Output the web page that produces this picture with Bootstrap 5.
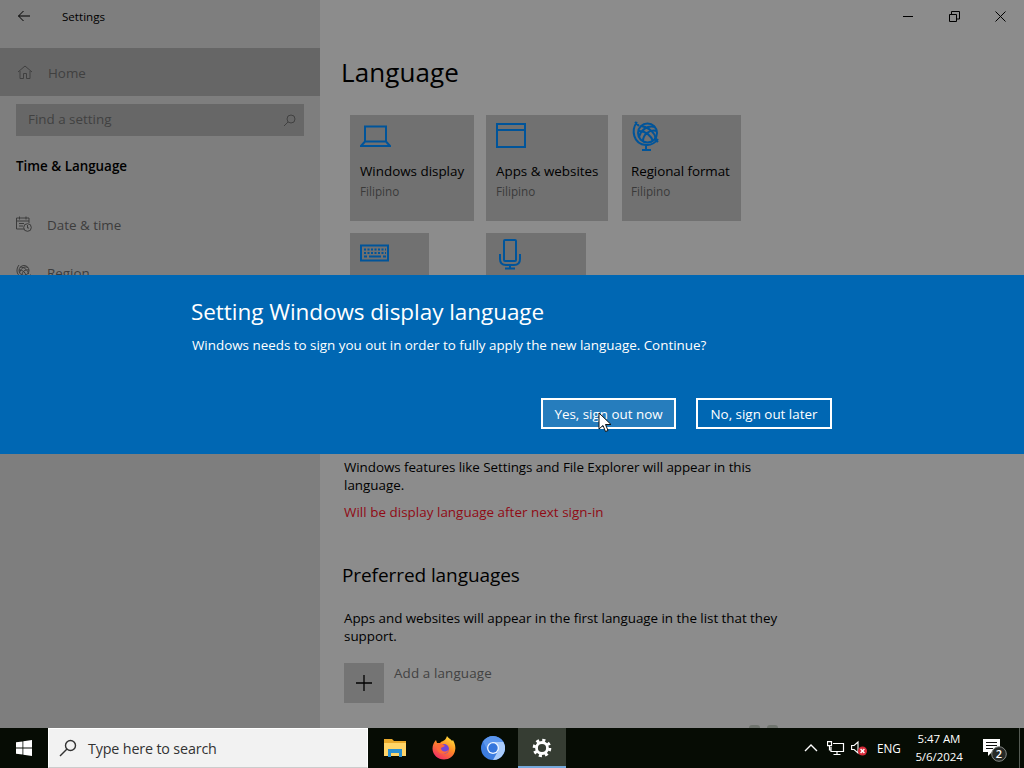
<!DOCTYPE html>
<html lang="en">
<head>
<meta charset="utf-8">
<title>Settings</title>
<link href="https://cdn.jsdelivr.net/npm/bootstrap@5.3.0/dist/css/bootstrap.min.css" rel="stylesheet">
<script src="https://cdn.jsdelivr.net/npm/bootstrap@5.3.0/dist/js/bootstrap.bundle.min.js" defer></script>
<style>
body{width:1024px;height:768px;overflow:hidden;font-family:"Open Sans","Noto Sans",sans-serif;font-size:13.4px;line-height:18px;color:#000;background:#8c8c8c}
svg{display:block;flex:none;fill:none;stroke:currentColor}
.t{white-space:nowrap;display:block}
.window{height:728px}
.side{width:320px;background:#7e7e7e;color:#3c3c3c}
.titlebar{height:33px;color:#000}
.home{height:48px;margin-top:15px;background:#666;padding-left:17px;color:#404040}
.find{height:32px;width:288px;margin:8px 0 0 16px;background:#676767;color:#414141}
.navrow{height:48px;padding-left:16px}
.main{width:704px;background:#8c8c8c}
.caption-btn{width:46px;height:33px}
.tile{background:#717171;padding-left:10px;height:106px}
.tile .art{height:47px;padding-top:5px;color:#00549a}
.sub{color:#3a3a3a;font-size:11.7px;margin-top:2px}
.dialog{top:275px;left:0;width:1024px;height:179px;background:#0067b3;color:#fff;padding:0 192px}
.dbtn{height:31px;border:2px solid #fff;border-radius:0;color:#fff;padding:0;font-size:13.4px;line-height:26px}
.dbtn.hot{background:#267dbd}
.taskbar{height:40px;background:#060c04;color:#fff}
.searchbox{width:320px;height:40px;background:#f2f2f2;color:#333;border:1px solid #fff;border-bottom-color:#ccc}
.app{width:49px;height:40px}
.app.on{width:48px;background:#363d33;border-bottom:2px solid #76a9dc}
.smudge{left:749px;bottom:0;gap:7px}
.smudge i{width:11px;height:3px;border-radius:6px 6px 0 0;background:#6f746e}
</style>
</head>
<body>
<div class="window position-relative d-flex overflow-hidden">
  <aside class="side flex-shrink-0">
    <div class="titlebar d-flex align-items-center">
      <svg width="14" height="12" viewBox="0 0 14 12" style="margin-left:17px;margin-top:-2px"><path d="M13 6H1.5M6.5 1l-5 5 5 5"/></svg>
      <span class="t" style="margin-left:31px;font-size:11.6px">Settings</span>
    </div>
    <div class="home d-flex align-items-center">
      <svg width="16" height="16" viewBox="0 0 16 16"><path d="M1 8l7-6 7 6M3 7v7.500h3.500V9.500h3v5H13V7"/></svg>
      <span class="t" style="margin:2px 0 0 15px">Home</span>
    </div>
    <div class="find d-flex align-items-center justify-content-between">
      <span class="t" style="margin-left:12px;margin-top:-2px">Find a setting</span>
      <svg class="me-2" width="13" height="13" viewBox="0 0 13 13"><circle cx="8" cy="5" r="4"/><path d="M5 8l-4 4"/></svg>
    </div>
    <div class="t fw-semibold text-black" style="margin:21px 0 0 16px;">Time &amp; Language</div>
    <div class="navrow d-flex align-items-center" style="margin-top:26px">
      <svg width="16" height="16" viewBox="0 0 16 16" style="margin-top:-2px"><path d="M8 13H.5V2H13v5M.5 5H13M3.500 .5v3M10 .5v3M3 7.500h5M3 10h4"/><circle cx="11.500" cy="11.500" r="3.800"/><path d="M11.500 9v3H13"/></svg>
      <span class="t" style="margin-left:15px">Date &amp; time</span>
    </div>
    <div class="navrow d-flex align-items-center">
      <svg width="16" height="16" viewBox="0 0 16 16" style="margin-top:-2px"><circle cx="8" cy="6.500" r="5"/><path d="M3 1C-1 6 1 13 8 13.500c3 0 5-1 6.500-3M4 3c5 0 8 4 8.500 7M3.500 9C5 4 8 2 12 3.500M3 6c4 0 6 2 7 5.500M6 11C6 8 9 5 13 6M8 13v2.500M5 15.500h6"/></svg>
      <span class="t" style="margin-left:15px">Region</span>
    </div>
  </aside>
  <main class="main">
    <div class="titlebar d-flex justify-content-end">
      <div class="caption-btn d-flex align-items-center justify-content-center"><svg width="12" height="11"><path d="M0 5.500h10"/></svg></div>
      <div class="caption-btn d-flex align-items-center justify-content-center"><svg width="12" height="11"><path d="M.5 3.500h7v7h-7zM2.500 3V.5h8v7.500H8"/></svg></div>
      <div class="caption-btn d-flex align-items-center justify-content-center"><svg width="12" height="11"><path d="M.5.5l10 10M10.500.5l-10 10"/></svg></div>
    </div>
    <h1 class="t fw-normal mb-0" style="margin:19px 0 0 21px;font-size:26px;line-height:40px;letter-spacing:.1px">Language</h1>
    <div class="d-flex" style="margin:23px 0 0 30px">
      <div class="tile" style="width:124px">
        <div class="art"><svg width="31" height="32" viewBox="0 0 31 32" stroke-width="2"><path d="M5 6.500h21v15H5zM5 21.500l-4 4.500h29l-4-4.500"/></svg></div>
        <span class="t">Windows display</span><span class="t sub">Filipino</span>
      </div>
      <div class="tile" style="width:122px;margin-left:12px">
        <div class="art"><svg width="31" height="32" viewBox="0 0 31 32" stroke-width="2"><path d="M1 4h28v23H1zM1 10h28"/></svg></div>
        <span class="t">Apps &amp; websites</span><span class="t sub">Filipino</span>
      </div>
      <div class="tile" style="width:119px;margin-left:14px;padding-left:9px">
        <div class="art"><svg width="31" height="32" viewBox="0 0 31 32" stroke-width="2"><circle cx="16.500" cy="13" r="9.500"/><path d="M6 2C0 10 2 24 15 25c5 .5 9-2 12-6M4 2l4 4M24 19l3 3M15 25v5M11 30h9M10 6c8 1 14 7 15 13M8 17C10 10 16 5 24 7M8 11c7 0 12 5 14 10M12 21C12 15 18 9 26 11"/></svg></div>
        <span class="t" style="letter-spacing:-.06px">Regional format</span><span class="t sub">Filipino</span>
      </div>
    </div>
    <div class="d-flex" style="margin:12px 0 0 30px">
      <div class="tile" style="width:79px"><div class="art"><svg width="31" height="32" viewBox="0 0 31 32" stroke-width="2"><path d="M1 7.500h27v15H1z"/><path d="M4 11.500h22M4 15h22" stroke-dasharray="2 1.500"/><path d="M4 18.500h3M9 18.500h12M23 18.500h3"/></svg></div></div>
      <div class="tile" style="width:100px;margin-left:57px"><div class="art"><svg width="31" height="32" viewBox="0 0 31 32" stroke-width="2"><rect x="8" y="2" width="12" height="21" rx="1"/><path d="M4 16v5q0 6 6 6h8q6 0 6-6v-5M14 27v3.500M9 30.500h10"/></svg></div></div>
    </div>
    <div style="margin:119px 0 0 24px;width:450px">
      <span class="t" style="letter-spacing:-.06px">Windows features like Settings and File Explorer will appear in this</span>
      <span class="t">language.</span>
      <span class="t" style="margin-top:9px;color:#900a14;letter-spacing:.04px">Will be display language after next sign-in</span>
    </div>
    <h2 class="t fw-normal mb-0" style="margin:42px 0 0 22px;font-size:19px;line-height:24px;letter-spacing:-.08px">Preferred languages</h2>
    <div style="margin:22px 0 0 24px">
      <span class="t" style="letter-spacing:-.03px">Apps and websites will appear in the first language in the list that they</span>
      <span class="t">support.</span>
    </div>
    <div class="d-flex" style="margin:18px 0 0 24px">
      <div class="d-flex align-items-center justify-content-center" style="width:40px;height:40px;background:#747474"><svg width="16" height="16"><path d="M8 0v16M0 8h16" stroke-width="1.300"/></svg></div>
      <span class="t" style="margin:1px 0 0 10px;color:#424242;letter-spacing:.13px">Add a language</span>
    </div>
  </main>
  <div class="smudge position-absolute d-flex"><i></i><i></i></div>
  <section class="dialog position-absolute">
    <h3 class="t fw-normal mb-0" style="margin:21px 0 0 -1px;font-size:22.500px;line-height:32px;letter-spacing:-.05px">Setting Windows display language</h3>
    <p class="t mb-0" style="margin-top:8px">Windows needs to sign you out in order to fully apply the new language. Continue?</p>
    <div class="d-flex justify-content-end" style="margin-top:44px;gap:20px">
      <button class="btn dbtn hot" style="width:135px">Yes, sign out now</button>
      <button class="btn dbtn" style="width:136px">No, sign out later</button>
    </div>
    <svg class="position-absolute" style="left:598px;top:137px" width="14" height="21" viewBox="0 0 14 21"><path d="M1 1v16l4-3.500 2.500 6 2.500-1-2.500-6H13z" fill="#fff" stroke="#111"/></svg>
  </section>
</div>
<footer class="taskbar d-flex">
  <div class="d-flex align-items-center justify-content-center" style="width:48px"><svg width="16" height="16" viewBox="0 0 16 16" style="fill:#fff;stroke:none"><path d="M0 2.300l6.500-.9v6.100H0zM7.300 1.300L16 0v7.500H7.300zM0 8.400h6.500v6.200L0 13.700zM7.300 8.400H16V16l-8.700-1.300z"/></svg></div>
  <div class="searchbox d-flex align-items-center"><svg width="18" height="18" viewBox="0 0 18 18" style="margin-left:10px" stroke-width="1.400"><circle cx="11.500" cy="6.500" r="5"/><path d="M8 10l-7 7"/></svg><span class="t" style="margin-left:11px;margin-top:1px;font-size:14.300px;letter-spacing:-.15px">Type here to search</span></div>
  <div class="app d-flex align-items-center justify-content-center" style="margin-left:2px"><svg width="22" height="20" viewBox="0 0 22 20" style="stroke:none"><path d="M0 1h8l2 2h12v15H0z" fill="#e8a92c"/><path d="M0 5h22v13H0z" fill="#ffd568"/><path d="M4 11h14v8h-3v-4H7v4H4z" fill="#2a8fd0"/></svg></div>
  <div class="app d-flex align-items-center justify-content-center"><svg width="24" height="24" viewBox="0 0 24 24" style="stroke:none"><defs><linearGradient id="f" x1=".8" y1="0" x2=".2" y2="1"><stop offset="0" stop-color="#ffe43c"/><stop offset=".45" stop-color="#ff8a25"/><stop offset="1" stop-color="#f0256b"/></linearGradient></defs><path d="M15 0c2 3 4 3 5 5l1-1c2 4 3 7 2 11-1 5-6 8.500-11 8.500C6 23.500.5 19 .5 12.500.500 9 2 6 4 4l1 3 3 0 1-1C11 5 14 4 15 0z" fill="url(#f)"/><circle cx="12" cy="13" r="5" fill="#7546d8"/><path d="M5 8c4-1 6 0 8 2l-4 2c0 4 5 5 8 1-1 6-10 7-12 0z" fill="#ff6a3a"/></svg></div>
  <div class="app d-flex align-items-center justify-content-center"><svg width="24" height="24" viewBox="0 0 24 24" style="stroke:none"><circle cx="12" cy="12" r="12" fill="#3d7de0"/><path d="M12 6h10.400A12 12 0 0 1 12 24l5-9z" fill="#a9cbfb"/><path d="M2 5.500A12 12 0 0 1 22.400 6H12a6 6 0 0 0-5 9z" fill="#5b96ee"/><circle cx="12" cy="12" r="6" fill="#eef5ff"/><circle cx="12" cy="12" r="4.700" fill="#3475dc"/></svg></div>
  <div class="app on d-flex align-items-center justify-content-center" style="margin-left:1px"><svg width="20" height="20" viewBox="0 0 20 20" style="margin-top:2px"><circle cx="10" cy="10" r="5.500" stroke="#fff" stroke-width="2.800"/><circle cx="10" cy="10" r="7.800" stroke="#fff" stroke-width="3" stroke-dasharray="3.060 3.066"/></svg></div>
  <div class="d-flex ms-auto align-items-center">
    <svg width="14" height="8" viewBox="0 0 14 8" stroke-width="1.400"><path d="M1 7l6-6 6 6"/></svg>
    <svg width="18" height="15" viewBox="0 0 18 15" stroke-width="1.200" style="margin-left:9px"><path d="M6 2.500h10.500v8H4V6M10 10.500v3M6.500 13.500h7M.5.600h4v4h-4zM2.500 4.500V9H4"/></svg>
    <svg width="18" height="16" viewBox="0 0 18 16" style="margin-left:6px" stroke-width="1.100"><path d="M.6 5.500h2.500L7 2v11L3.100 9.500H.6z"/><circle cx="11.500" cy="11" r="4.500" fill="#d92b3a" stroke="none"/><path d="M9.600 9.100l3.800 3.800M13.400 9.100l-3.800 3.800" stroke-width="1.400"/></svg>
    <span class="t" style="margin-left:8px;font-size:11.700px;width:24px">ENG</span>
    <div class="text-center" style="margin-left:14px;width:48px;font-size:11.500px;line-height:18px;letter-spacing:-.08px"><span class="t">5:47 AM</span><span class="t">5/6/2024</span></div>
    <svg width="26" height="26" viewBox="0 0 26 26" style="margin-left:20px;margin-top:2px;margin-right:10px"><path d="M0 3h17v13h-8l-4 4v-4H0z" fill="#fff" stroke="none"/><path d="M3 6.500h11M3 9.500h11M3 12.500h7" stroke="#111"/><circle cx="16" cy="18" r="7.300" fill="#272a27" stroke="#848784"/><text x="16" y="22" text-anchor="middle" font-size="11" font-weight="600" fill="#fff" stroke="none">2</text></svg>
    <div style="width:5px;height:40px;border-left:1px solid #555b54"></div>
  </div>
</footer>
</body>
</html>
